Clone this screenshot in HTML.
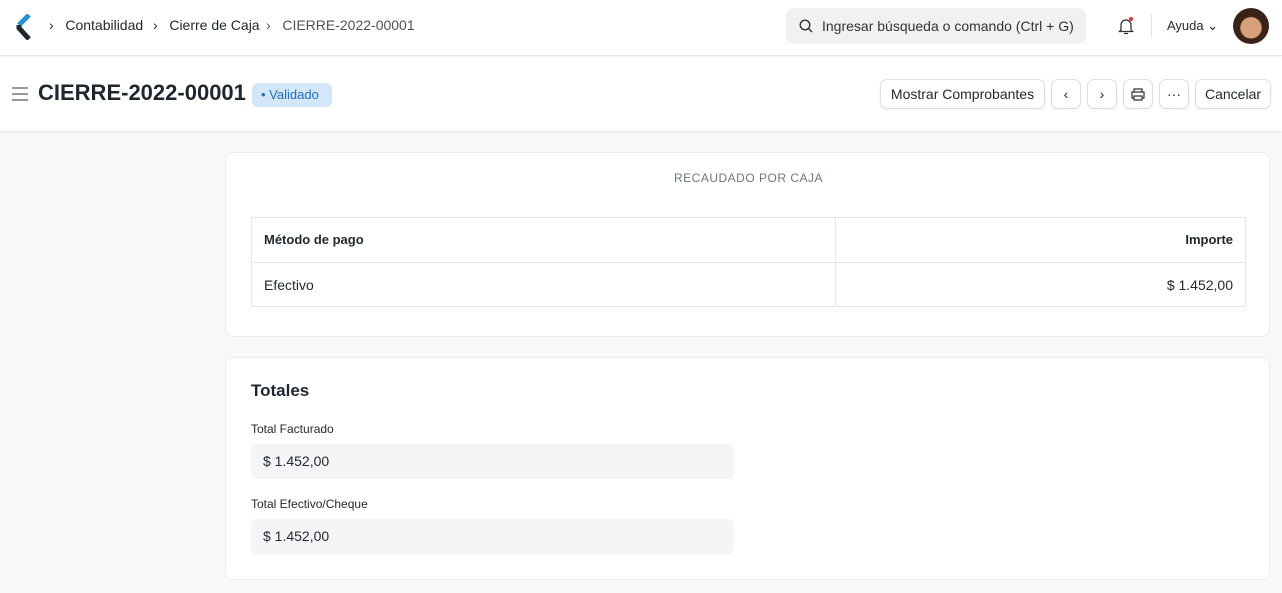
<!DOCTYPE html>
<html><head><meta charset="utf-8"><style>
*{box-sizing:border-box;margin:0;padding:0}
body{width:1282px;height:593px;overflow:hidden;background:#f8f8f8;font-family:"Liberation Sans",sans-serif;color:#1f272e;position:relative}
.nav{position:absolute;left:0;top:0;width:1282px;height:56px;background:#fff;border-bottom:1px solid #e8e8e8}
.bar{position:absolute;left:0;top:57px;width:1282px;height:74px;background:#fff;box-shadow:0 1px 3px rgba(0,0,0,.08)}
.abs{position:absolute}
.crumb{font-size:14px;top:17px;color:#1f272e}
.btn{position:absolute;top:79px;height:30px;border:1px solid #dcdfe3;border-radius:7px;background:#fff;font-size:14px;display:flex;align-items:center;justify-content:center;box-shadow:0 1px 2px rgba(0,0,0,.05)}
.card{position:absolute;left:225px;width:1045px;background:#fff;border:1px solid #ececec;border-radius:8px}
.inp{position:absolute;left:25px;width:483px;height:35px;background:#f4f5f6;border-radius:6px;font-size:14px;padding:9px 12px}
</style></head><body>
<div class="nav">
<svg class="abs" style="left:16px;top:14px" width="16" height="26" viewBox="0 0 16 26"><path d="M13 1 L3 11" stroke="#2b8fd1" stroke-width="5"/><path d="M3 11 L3 14 L13 25" stroke="#1f272e" stroke-width="5" fill="none"/></svg>
<span class="abs crumb" style="left:49px">›&nbsp;&nbsp;&nbsp;Contabilidad</span>
<span class="abs crumb" style="left:153px">›&nbsp;&nbsp;&nbsp;Cierre de Caja</span>
<span class="abs crumb" style="left:266px;color:#525252">›&nbsp;&nbsp;&nbsp;CIERRE-2022-00001</span>
<div class="abs" style="left:786px;top:8px;width:300px;height:36px;background:#f0f1f2;border-radius:8px;font-size:14px;padding:10px 0 0 36px;color:#333">Ingresar búsqueda o comando (Ctrl + G)</div>
<svg class="abs" style="left:799px;top:19px" width="14" height="14" viewBox="0 0 14 14"><circle cx="6" cy="6" r="4.8" stroke="#333" stroke-width="1.4" fill="none"/><path d="M9.5 9.5L13 13" stroke="#333" stroke-width="1.4"/></svg>
<svg class="abs" style="left:1117px;top:16px" width="18" height="20" viewBox="0 0 18 20"><path d="M4 14V9a5 5 0 0 1 10 0v5l1.5 1.5h-13z M7 17.5h4" stroke="#333" stroke-width="1.3" fill="none"/><circle cx="14" cy="3" r="2" fill="#e03636"/></svg>
<div class="abs" style="left:1151px;top:14px;width:1px;height:24px;background:#e2e2e2"></div>
<span class="abs" style="left:1167px;top:18px;font-size:13px">Ayuda ⌄</span>
<div class="abs" style="left:1233px;top:8px;width:36px;height:36px;border-radius:50%;background:radial-gradient(circle at 50% 55%,#d9a07c 0 38%,#3a2216 42%)"></div>
</div>
<div class="bar">
<svg class="abs" style="left:12px;top:30px" width="16" height="14"><path d="M0 1h16M0 7h16M0 13h16" stroke="#777" stroke-width="1.5"/></svg>
<div class="abs" style="left:38px;top:23px;font-size:22px;font-weight:bold">CIERRE-2022-00001</div>
<div class="abs" style="left:252px;top:26px;width:80px;height:24px;background:#d3e7f8;border-radius:6px;color:#1f6fb8;font-size:13px;padding:4px 0 0 9px">• Validado</div>
</div>
<div class="btn" style="left:880px;width:165px">Mostrar Comprobantes</div>
<div class="btn" style="left:1051px;width:30px">‹</div>
<div class="btn" style="left:1087px;width:30px">›</div>
<div class="btn" style="left:1123px;width:30px"><svg width="14" height="13"><path d="M3 4V1h8v3M3 10H1V4h12v6h-2M3 8h8v4H3z" stroke="#333" stroke-width="1.2" fill="none"/></svg></div>
<div class="btn" style="left:1159px;width:30px">···</div>
<div class="btn" style="left:1195px;width:76px">Cancelar</div>

<div class="card" style="top:152px;height:185px">
<div class="abs" style="left:0;width:1045px;top:18px;text-align:center;font-size:12px;color:#6c7680;letter-spacing:.5px">RECAUDADO POR CAJA</div>
<div class="abs" style="left:25px;top:64px;width:995px;height:90px;border:1px solid #e4e6e8">
<div class="abs" style="left:0;top:44px;width:993px;height:1px;background:#e4e6e8"></div>
<div class="abs" style="left:583px;top:0;width:1px;height:88px;background:#e4e6e8"></div>
<div class="abs" style="left:12px;top:14px;font-size:13px;font-weight:bold">Método de pago</div>
<div class="abs" style="right:12px;top:14px;font-size:13px;font-weight:bold">Importe</div>
<div class="abs" style="left:12px;top:59px;font-size:14px">Efectivo</div>
<div class="abs" style="right:12px;top:59px;font-size:14px">$ 1.452,00</div>
</div>
</div>
<div class="card" style="top:357px;height:223px">
<div class="abs" style="left:25px;top:23px;font-size:17px;font-weight:bold">Totales</div>
<div class="abs" style="left:25px;top:64px;font-size:12px">Total Facturado</div>
<div class="inp" style="top:86px">$ 1.452,00</div>
<div class="abs" style="left:25px;top:139px;font-size:12px">Total Efectivo/Cheque</div>
<div class="inp" style="top:161px">$ 1.452,00</div>
</div>
</body></html>
